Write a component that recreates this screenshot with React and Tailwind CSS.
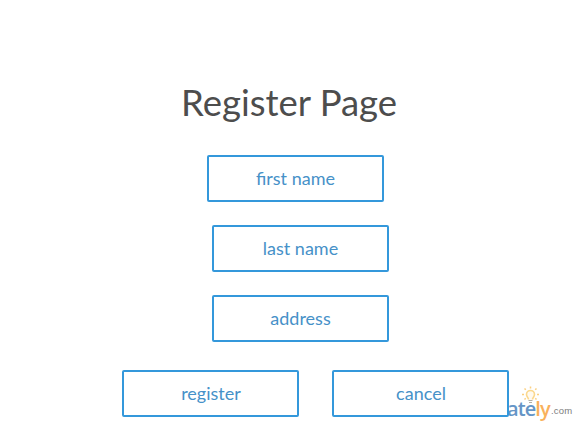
function Box({ children, className = "" }) {
  return (
    <button
      type="button"
      className={`h-[47px] w-[177px] shrink-0 rounded-[2px] border-2 border-[#3498db] bg-white text-center text-[18px] leading-[43px] text-[#4691c8] ${className}`}
    >
      {children}
    </button>
  );
}

function Watermark() {
  return (
    <div className="absolute top-[384px] left-[508px] h-[41px] w-[70px]">
      <svg className="absolute top-[2px] left-[13px]" width="19" height="18" viewBox="0 0 19 18" fill="none">
        <path
          d="M7.500 13.500c0-2-2-2.600-2-5a4 4 0 0 1 8 0c0 2.400-2 3-2 5"
          stroke="#fbd88e"
          strokeWidth="1.600"
          fill="#fffaf0"
        />
        <path d="M7.500 14.500h4M8 16.500h3" stroke="#b0aea5" strokeWidth="1.100" />
        <path
          d="M9.500 0.500v2M3.500 2.500l1.300 1.300M15.500 2.500l-1.300 1.300M1 8.500h2M16 8.500h2M3.500 13.500l1.200-1.200M15.500 13.500l-1.200-1.200"
          stroke="#fbd080"
          strokeWidth="1.500"
        />
      </svg>
      <span className="absolute top-[13px] left-[-1px] font-['Open_Sans',sans-serif] text-[20px] leading-[24px] font-semibold tracking-[-0.900px] whitespace-nowrap text-[#6595c6]">
        ate<span className="text-[#f9b15c]">ly</span>
      </span>
      <span className="absolute top-[20px] left-[43px] font-['Liberation_Sans',sans-serif] text-[9.500px] leading-[14px] tracking-[0.200px] text-[#7d7d7d]">
        .com
      </span>
    </div>
  );
}

export default function App() {
  return (
    <main className="relative flex h-[425px] w-[578px] flex-col items-start overflow-hidden bg-white font-[Lato,sans-serif]">
      <Watermark />
      <h1 className="mt-[78px] ml-[181px] h-[48px] text-[36.500px] leading-[48px] whitespace-nowrap text-[#4d4d4d]">
        Register Page
      </h1>
      <div className="mt-[29px] ml-[207px] flex flex-col gap-[23px]">
        <Box>first name</Box>
        <Box className="ml-[5px]">last name</Box>
        <Box className="ml-[5px]">address</Box>
      </div>
      <div className="relative mt-[28px] ml-[122px] flex gap-[33px]">
        <Box className="pl-px">register</Box>
        <Box className="pl-px">cancel</Box>
      </div>
    </main>
  );
}
